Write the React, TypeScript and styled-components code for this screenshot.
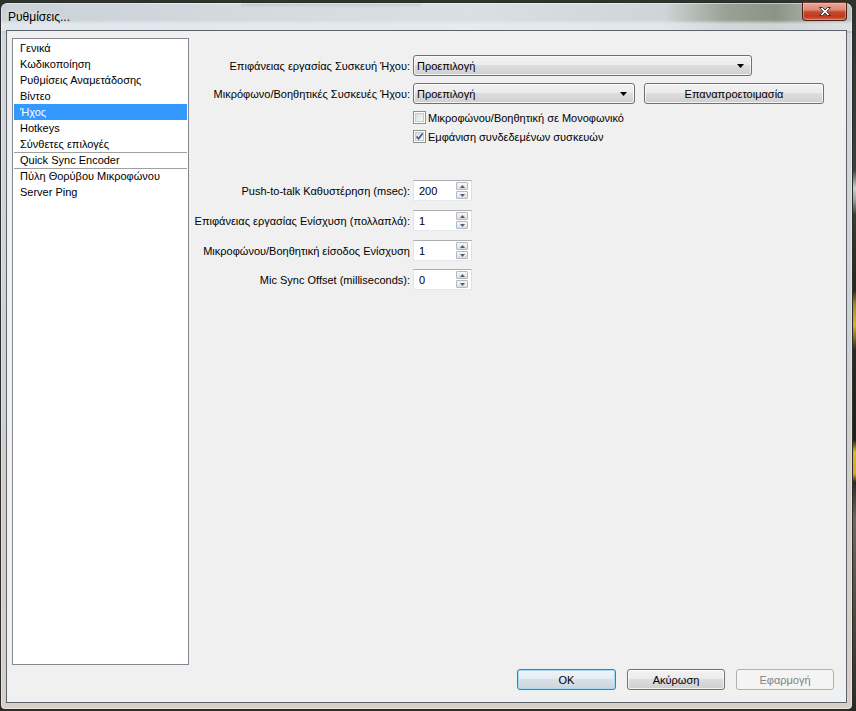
import React from 'react';
import styled, { createGlobalStyle } from 'styled-components';

const Global = createGlobalStyle`
  html, body { margin: 0; padding: 0; }
  body {
    width: 856px;
    height: 711px;
    overflow: hidden;
    background: linear-gradient(to bottom,
      #30332a 0px, #3c4034 170px, #cfd0cc 188px, #9ea19a 200px, #3a3c30 215px,
      #262719 290px, #a58d2a 305px, #d8b22c 325px, #2b2a1c 350px, #1f2018 440px,
      #e0b52a 452px, #d3aa27 474px, #2a2b22 482px, #6f6a5e 520px, #2a2a24 100%);
    font-family: "Liberation Sans", Arial, sans-serif;
    font-size: 11px;
    color: #000;
  }
`;

const Window = styled.div`
  margin-top: 2px;
  width: 853px;
  height: 708px;
  box-sizing: border-box;
  border: 1px solid rgba(22, 26, 30, 0.9);
  border-radius: 7px 7px 5px 5px;
  padding: 0 5px 6px 5px;
  display: flex;
  flex-direction: column;
  box-shadow: inset 0 0 0 1px rgba(255, 255, 255, 0.45);
  background:
    linear-gradient(to bottom, rgba(255,255,255,0) 0px, rgba(255,255,255,0) 17px, rgba(236,239,245,0.7) 21px, rgba(236,239,245,0.7) 28px, rgba(255,255,255,0) 28px) top / 100% 30px no-repeat,
    linear-gradient(to bottom, rgba(90,100,110,0.18) 0px, rgba(90,100,110,0) 5px) 240px 0 / 180px 6px no-repeat,
    linear-gradient(to right, #c9d1d7 0%, #d4dade 30%, #dadfe3 55%, #ced4d7 78%, #9aa296 85%, #8b9386 91%, #a7ada5 95%, #bfc3bf 100%) top / 100% 30px no-repeat,
    linear-gradient(to bottom, #d3d8dc 0%, #cfd3d5 40%, #d2cdc7 70%, #d8cfc6 100%);
`;

const TitleBar = styled.div`
  height: 27px;
  display: flex;
  align-items: center;
  padding-left: 2px;
`;

const Title = styled.span`
  font-family: "Liberation Sans", Arial, sans-serif;
  font-size: 12px;
  color: #000;
  text-shadow: 0 0 6px rgba(255, 255, 255, 0.9);
`;

const CloseButton = styled.div`
  margin-left: auto;
  align-self: flex-start;
  margin-top: -1px;
  width: 45px;
  height: 19px;
  box-sizing: border-box;
  border: 1px solid #4b1f19;
  border-top-color: #6b3a33;
  border-radius: 0 0 4px 4px;
  background: linear-gradient(to bottom, #e6a597 0%, #db8a78 40%, #c94a2f 52%, #bf3a1f 78%, #cf6448 100%);
  box-shadow: inset 0 0 0 1px rgba(255, 230, 220, 0.35);
  display: flex;
  align-items: center;
  justify-content: center;
`;

const Client = styled.div`
  flex: 1;
  box-sizing: border-box;
  border: 1px solid #5c636b;
  background: #f0f0f0;
  padding: 7px 0 0 5px;
  display: flex;
  flex-direction: column;
`;

const Main = styled.div`
  display: flex;
  height: 627px;
`;

const List = styled.div`
  width: 177px;
  height: 627px;
  box-sizing: border-box;
  border: 1px solid #828790;
  background: #fff;
  padding: 1px 1px 1px 1px;
`;

const Item = styled.div<{ $selected?: boolean; $separator?: boolean }>`
  height: 16px;
  box-sizing: border-box;
  line-height: ${p => (p.$separator ? 15 : 16)}px;
  padding-left: 6px;
  white-space: nowrap;
  border-top: ${p => (p.$separator ? '1px solid #a0a0a0' : 'none')};
  background: ${p => (p.$selected ? '#3399ff' : 'transparent')};
  color: ${p => (p.$selected ? '#fff' : '#000')};
`;

const Form = styled.div`
  flex: 1;
  padding-top: 17px;
  display: flex;
  flex-direction: column;
`;

const Row = styled.div<{ $top: number; $height: number }>`
  display: flex;
  align-items: center;
  margin-top: ${p => p.$top}px;
  height: ${p => p.$height}px;
`;

const Label = styled.div`
  width: 221px;
  text-align: right;
  margin-right: 3px;
  white-space: nowrap;
`;

const Indent = styled.div`
  width: 224px;
`;

const PushButton = styled.div<{ $width: number; $kind?: 'default' | 'normal' | 'disabled'; $align?: 'left' | 'center' }>`
  box-sizing: border-box;
  width: ${p => p.$width}px;
  height: 21px;
  border-radius: 3px;
  display: flex;
  align-items: center;
  justify-content: ${p => (p.$align === 'left' ? 'space-between' : 'center')};
  padding: ${p => (p.$align === 'left' ? '0 7px 0 3px' : '0')};
  white-space: nowrap;
  border: 1px solid ${p => (p.$kind === 'default' ? '#3c7fb1' : p.$kind === 'disabled' ? '#adb2b5' : '#707070')};
  color: ${p => (p.$kind === 'disabled' ? '#838383' : '#000')};
  background: ${p =>
    p.$kind === 'disabled'
      ? '#f4f4f4'
      : p.$kind === 'default'
      ? 'linear-gradient(to bottom, #eef4f8 0%, #e6edf2 49%, #d7e0e6 50%, #ccd6dd 100%)'
      : 'linear-gradient(to bottom, #f2f2f2 0%, #ebebeb 49%, #dddddd 50%, #cfcfcf 100%)'};
  box-shadow: ${p =>
    p.$kind === 'disabled'
      ? 'none'
      : p.$kind === 'default'
      ? 'inset 0 0 0 1px #a7dcf7'
      : 'inset 0 0 0 1px rgba(255,255,255,0.75)'};
`;

const Spacer = styled.div<{ $w: number }>`
  width: ${p => p.$w}px;
  flex: none;
`;

const CheckBox = styled.span`
  width: 13px;
  height: 13px;
  box-sizing: border-box;
  border: 1px solid #8e8f8f;
  background: #fff;
  padding: 1px;
  margin-right: 2px;
  position: relative;
  flex: none;
`;

const CheckInner = styled.span`
  display: block;
  width: 9px;
  height: 9px;
  box-sizing: border-box;
  border: 1px solid #c8cacc;
  background: linear-gradient(135deg, #d9dbde 0%, #eceef0 60%, #f8f8f8 100%);
`;

const CheckMark = styled.svg`
  position: absolute;
  left: 1px;
  top: 1px;
`;

const SpinBox = styled.div`
  width: 59px;
  height: 21px;
  box-sizing: border-box;
  background: #fff;
  border: 1px solid;
  border-color: #abadb3 #dbdfe6 #e3e9ef #e2e3ea;
  display: flex;
  align-items: center;
  padding: 0 3px 0 5px;
`;

const SpinValue = styled.span`
  flex: 1;
`;

const SpinButtons = styled.div`
  display: flex;
  flex-direction: column;
  gap: 1px;
`;

const SpinButton = styled.div`
  width: 12px;
  height: 8px;
  box-sizing: border-box;
  border: 1px solid #b4b9c0;
  border-radius: 1px;
  background: linear-gradient(to bottom, #f7f7f7 0%, #ececec 50%, #dcdcdc 100%);
  display: flex;
  align-items: center;
  justify-content: center;
`;

const ButtonBar = styled.div`
  margin-top: 4px;
  display: flex;
  justify-content: flex-end;
  gap: 11px;
  padding-right: 12px;
`;

const Arrow = () => (
  <svg width="7" height="4" viewBox="0 0 7 4">
    <polygon points="0,0 7,0 3.5,4" fill="#000" />
  </svg>
);

const SpinArrow = ({ up }: { up?: boolean }) => (
  <svg width="5" height="3" viewBox="0 0 5 3">
    <polygon points={up ? '0,3 5,3 2.5,0' : '0,0 5,0 2.5,3'} fill="#4d5d80" />
  </svg>
);

const Check = ({ checked }: { checked?: boolean }) => (
  <CheckBox>
    <CheckInner />
    {checked && (
      <CheckMark width="9" height="9" viewBox="0 0 9 9">
        <path d="M1.5 4.5 L3.6 6.8 L7.6 1.4" fill="none" stroke="#3c4f87" strokeWidth="1.6" />
      </CheckMark>
    )}
  </CheckBox>
);

const Spin = ({ value }: { value: string }) => (
  <SpinBox>
    <SpinValue>{value}</SpinValue>
    <SpinButtons>
      <SpinButton>
        <SpinArrow up />
      </SpinButton>
      <SpinButton>
        <SpinArrow />
      </SpinButton>
    </SpinButtons>
  </SpinBox>
);

const items: { label: string; selected?: boolean; separator?: boolean }[] = [
  { label: 'Γενικά' },
  { label: 'Κωδικοποίηση' },
  { label: 'Ρυθμίσεις Αναμετάδοσης' },
  { label: 'Βίντεο' },
  { label: 'Ήχος', selected: true },
  { label: 'Hotkeys' },
  { label: 'Σύνθετες επιλογές' },
  { label: 'Quick Sync Encoder', separator: true },
  { label: 'Πύλη Θορύβου Μικροφώνου', separator: true },
  { label: 'Server Ping' },
];

export default function App() {
  return (
    <>
      <Global />
      <Window>
        <TitleBar>
          <Title>Ρυθμίσεις...</Title>
          <CloseButton>
            <svg width="14" height="11" viewBox="0 0 14 11">
              <path
                d="M1.5 1.5 L4.6 1.5 L7 4 L9.4 1.5 L12.5 1.5 L8.8 5.5 L12.5 9.5 L9.4 9.5 L7 7 L4.6 9.5 L1.5 9.5 L5.2 5.5 Z"
                fill="#fff"
                stroke="#35353a"
                strokeWidth="1"
              />
            </svg>
          </CloseButton>
        </TitleBar>
        <Client>
          <Main>
            <List>
              {items.map(it => (
                <Item key={it.label} $selected={it.selected} $separator={it.separator}>
                  {it.label}
                </Item>
              ))}
            </List>
            <Form>
              <Row $top={0} $height={21}>
                <Label>Επιφάνειας εργασίας Συσκευή Ήχου:</Label>
                <PushButton $width={339} $align="left">
                  <span>Προεπιλογή</span>
                  <Arrow />
                </PushButton>
              </Row>
              <Row $top={7} $height={21}>
                <Label>Μικρόφωνο/Βοηθητικές Συσκευές Ήχου:</Label>
                <PushButton $width={222} $align="left">
                  <span>Προεπιλογή</span>
                  <Arrow />
                </PushButton>
                <Spacer $w={9} />
                <PushButton $width={180}>Επαναπροετοιμασία</PushButton>
              </Row>
              <Row $top={7} $height={13}>
                <Indent />
                <Check />
                <span>Μικροφώνου/Βοηθητική σε Μονοφωνικό</span>
              </Row>
              <Row $top={6} $height={13}>
                <Indent />
                <Check checked />
                <span>Εμφάνιση συνδεδεμένων συσκευών</span>
              </Row>
              <Row $top={37} $height={21}>
                <Label>Push-to-talk Καθυστέρηση (msec):</Label>
                <Spin value="200" />
              </Row>
              <Row $top={9} $height={21}>
                <Label>Επιφάνειας εργασίας Ενίσχυση (πολλαπλά):</Label>
                <Spin value="1" />
              </Row>
              <Row $top={9} $height={21}>
                <Label>Μικροφώνου/Βοηθητική είσοδος Ενίσχυση</Label>
                <Spin value="1" />
              </Row>
              <Row $top={8} $height={21}>
                <Label>Mic Sync Offset (milliseconds):</Label>
                <Spin value="0" />
              </Row>
            </Form>
          </Main>
          <ButtonBar>
            <PushButton $width={99} $kind="default">OK</PushButton>
            <PushButton $width={98}>Ακύρωση</PushButton>
            <PushButton $width={98} $kind="disabled">Εφαρμογή</PushButton>
          </ButtonBar>
        </Client>
      </Window>
    </>
  );
}
